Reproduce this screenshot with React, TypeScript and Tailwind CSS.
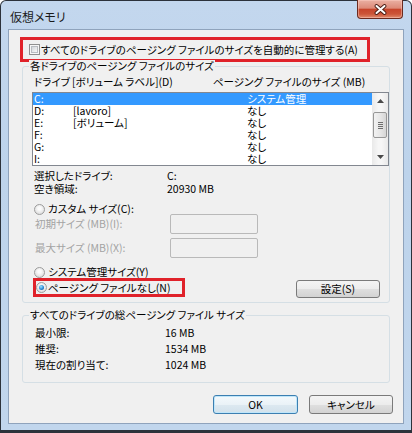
import React from "react";

function CheckBox() {
  return (
    <div className="w-[11px] h-[11px] shrink-0 border border-[#8f8f8f] bg-[#f6f6f6] p-[1px]">
      <div className="w-full h-full border border-[#b8bcc1] bg-[linear-gradient(135deg,#d3d6da,#f8f8f8)]" />
    </div>
  );
}

function Radio({ checked }: { checked?: boolean }) {
  return (
    <div className="w-[11px] h-[11px] shrink-0 rounded-full border border-[#9c9c9c] bg-[radial-gradient(circle_at_50%_40%,#fbfbfb_20%,#d2d2d2_100%)] flex items-center justify-center">
      {checked && (
        <div className="w-[5px] h-[5px] rounded-full bg-[radial-gradient(circle_at_40%_35%,#9fe4ff_0%,#2a8ad6_55%,#0c3f7a_100%)]" />
      )}
    </div>
  );
}

function Btn({ label, primary, className }: { label: string; primary?: boolean; className: string }) {
  return (
    <div
      className={
        "flex items-center justify-center rounded-[3px] border " +
        (primary
          ? "border-[#3c7fb1] shadow-[inset_0_0_0_1px_#bfe6fa] bg-[linear-gradient(#f4f9fc_0%,#eaf2f7_50%,#dde9f1_51%,#d2e1eb_100%)] "
          : "border-[#7a7a7a] bg-[linear-gradient(#f4f4f4_0%,#ececec_50%,#dfdfdf_51%,#d3d3d3_100%)] ") +
        className
      }
    >
      {label}
    </div>
  );
}

function Arrow({ down }: { down?: boolean }) {
  return (
    <svg width="7" height="4" viewBox="0 0 7 4">
      <path d={down ? "M0 0 L7 0 L3.5 4 Z" : "M0 4 L3.5 0 L7 4 Z"} fill="#4a4a4a" />
    </svg>
  );
}

const drives = [
  { d: "C:", label: "", size: "システム管理", sel: true },
  { d: "D:", label: "[lavoro]", size: "なし" },
  { d: "E:", label: "[ボリューム]", size: "なし" },
  { d: "F:", label: "", size: "なし" },
  { d: "G:", label: "", size: "なし" },
  { d: "I:", label: "", size: "なし" },
];

export default function App() {
  return (
    <div className="w-[412px] h-[433px] bg-white text-[10.5px] leading-[12px] text-black whitespace-nowrap font-['Noto_Sans_CJK_JP',sans-serif] [font-feature-settings:'palt']">
      <div className="w-[412px] h-[433px] flex flex-col rounded-t-[6px] border-x border-t border-b-[3px] border-[#2c323b] bg-[linear-gradient(180deg,#c3d7ee_0%,#bdd3eb_40%,#c1d6ed_100%)]">
        {/* title bar */}
        <div className="h-[28px] flex items-start justify-between">
          <div className="pl-[9px] pt-[10px] text-[12px] leading-[12px] text-[#1a1a1a]">仮想メモリ</div>
          <div className="-mt-[1px] mr-[8px] w-[46px] h-[19px] rounded-b-[4px] border border-t-0 border-[#6b2a1f] shadow-[inset_0_0_0_1px_rgba(255,210,200,0.45)] bg-[linear-gradient(#eab0a3_0%,#dd8a78_45%,#c7452c_52%,#cc5538_78%,#e08b6e_100%)] flex items-center justify-center">
            <svg width="13" height="11" viewBox="0 0 13 11">
              <path d="M2.5 2 L10.5 9 M10.5 2 L2.5 9" stroke="#4a1d15" strokeWidth="3.8" strokeLinecap="round" />
              <path d="M2.5 2 L10.5 9 M10.5 2 L2.5 9" stroke="#ffffff" strokeWidth="2" strokeLinecap="round" />
            </svg>
          </div>
        </div>

        {/* client area */}
        <div className="mx-[7px] h-[395px] border border-[#8fa3bc] bg-[#f0f0f0] flex flex-col">
          <div className="mt-[7px] ml-[11px] w-[350px] h-[25px] border-[3px] border-[#e0222a] flex items-center pl-[6px] gap-[1px]">
            <CheckBox />
            <span>すべてのドライブのページング ファイルのサイズを自動的に管理する(A)</span>
          </div>

          {/* group 1 */}
          <div className="relative mt-[4px] ml-[13px] w-[368px] h-[237px] border border-[#d5dfe5] rounded-[3px] flex flex-col">
            <div className="absolute left-[6px] -top-[7px] px-[1px] bg-[#f0f0f0] leading-[12px]">各ドライブのページング ファイルのサイズ</div>

            <div className="mt-[9px] h-[12px] pl-[11px] flex">
              <span className="w-[38px]">ドライブ</span>
              <span className="w-[141px]">[ボリューム ラベル](D)</span>
              <span>ページング ファイルのサイズ (MB)</span>
            </div>

            <div className="mt-[4px] ml-[9px] w-[357px] h-[74px] border border-[#828790] bg-white flex">
              <div className="flex-1 flex flex-col">
                {drives.map((r) => (
                  <div key={r.d} className={"h-[12px] pl-[1px] flex " + (r.sel ? "bg-[#3399ff] text-white" : "")}>
                    <span className="w-[39px]">{r.d}</span>
                    <span className="w-[174px]">{r.label}</span>
                    <span>{r.size}</span>
                  </div>
                ))}
              </div>
              <div className="w-[16px] flex flex-col bg-[linear-gradient(90deg,#e9e9e9,#f6f6f6_40%,#f6f6f6_60%,#e9e9e9)]">
                <div className="h-[16px] flex items-center justify-center"><Arrow /></div>
                <div className="mt-[3px] mx-[1px] h-[26px] rounded-[2px] border border-[#979797] bg-[linear-gradient(90deg,#f2f2f2,#e7e7e7_50%,#d6d6d6)] flex flex-col items-center justify-center gap-[1px]">
                  <div className="w-[5px] h-[1px] bg-[#6e6e6e]" />
                  <div className="w-[5px] h-[1px] bg-[#6e6e6e]" />
                  <div className="w-[5px] h-[1px] bg-[#6e6e6e]" />
                  <div className="w-[5px] h-[1px] bg-[#6e6e6e]" />
                </div>
                <div className="flex-1" />
                <div className="h-[16px] flex items-center justify-center"><Arrow down /></div>
              </div>
            </div>

            <div className="mt-[4px] h-[13px] pl-[11px] flex">
              <span className="w-[133px]">選択したドライブ:</span>
              <span>C:</span>
            </div>
            <div className="h-[13px] pl-[11px] flex">
              <span className="w-[133px]">空き領域:</span>
              <span>20930 MB</span>
            </div>

            <div className="mt-[8px] h-[10px] pl-[11px] flex items-center gap-[3px]">
              <Radio />
              <span>カスタム サイズ(C):</span>
            </div>
            <div className="h-[20px] pl-[12px] flex items-center">
              <span className="w-[135px] text-[#a3a3a3]">初期サイズ (MB)(I):</span>
              <div className="w-[88px] h-[20px] rounded-[2px] border border-[#b9b9b9] bg-[#f0f0f0]" />
            </div>
            <div className="mt-[4px] h-[20px] pl-[12px] flex items-center">
              <span className="w-[135px] text-[#a3a3a3]">最大サイズ (MB)(X):</span>
              <div className="w-[88px] h-[20px] rounded-[2px] border border-[#b9b9b9] bg-[#f0f0f0]" />
            </div>

            <div className="mt-[8px] h-[12px] pl-[11px] flex items-center gap-[3px]">
              <Radio />
              <span>システム管理サイズ(Y)</span>
            </div>
            <div className="flex items-start">
              <div className="ml-[10px] w-[152px] h-[19px] border-[3px] border-[#e0222a] flex items-center gap-[1px]">
                <Radio checked />
                <span>ページング ファイルなし(N)</span>
              </div>
              <Btn label="設定(S)" className="ml-auto mr-[9px] mt-[2px] w-[84px] h-[18px]" />
            </div>
          </div>

          {/* group 2 */}
          <div className="relative mt-[12px] ml-[13px] w-[368px] h-[68px] border border-[#d5dfe5] rounded-[3px] flex flex-col">
            <div className="absolute left-[6px] -top-[7px] px-[1px] bg-[#f0f0f0] leading-[12px]">すべてのドライブの総ページング ファイル サイズ</div>
            <div className="mt-[9px] h-[16px] pl-[12px] flex items-center">
              <span className="w-[130px]">最小限:</span>
              <span>16 MB</span>
            </div>
            <div className="h-[16px] pl-[12px] flex items-center">
              <span className="w-[130px]">推奨:</span>
              <span>1534 MB</span>
            </div>
            <div className="h-[16px] pl-[12px] flex items-center">
              <span className="w-[130px]">現在の割り当て:</span>
              <span>1024 MB</span>
            </div>
          </div>

          <div className="mt-[12px] pr-[10px] flex justify-end gap-[11px]">
            <Btn label="OK" primary className="w-[85px] h-[19px]" />
            <Btn label="キャンセル" className="w-[84px] h-[19px]" />
          </div>
        </div>
        <div className="flex-1" />
      </div>
    </div>
  );
}
